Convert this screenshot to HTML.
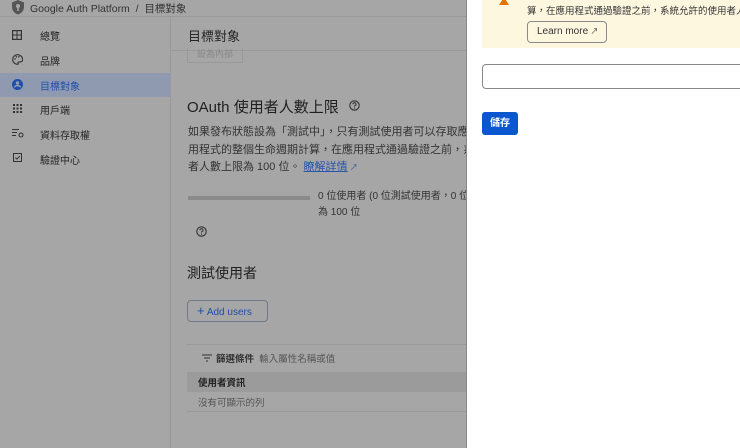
<!DOCTYPE html>
<html><head><meta charset="utf-8"><style>
*{box-sizing:border-box;margin:0;padding:0}
body{width:740px;height:448px;overflow:hidden;position:relative;background:#a6a6a6;font-family:"Liberation Sans","Noto Sans CJK TC",sans-serif;color:#222}
.a{position:absolute;white-space:nowrap}
.side{font-size:10px;color:#262626}
svg.i{position:absolute}
</style></head><body>
<div class="a" style="left:0;top:0;width:466px;height:17px;border-bottom:1px solid #999"></div>
<svg class="a" style="left:11px;top:0" width="14" height="15" viewBox="0 0 14 15"><path d="M7 0L1 2.5V7c0 3.5 2.6 6.5 6 7.5 3.4-1 6-4 6-7.5V2.5z" fill="#555"/><circle cx="7" cy="6" r="2" fill="#a6a6a6"/><rect x="6.2" y="7" width="1.6" height="4" fill="#a6a6a6"/></svg>
<div class="a" style="left:30px;top:1px;font-size:10.5px;color:#333">Google Auth Platform &nbsp;/&nbsp; 目標對象</div>
<div class="a" style="left:170px;top:17px;width:1px;height:431px;background:#999"></div>
<div class="a" style="left:0;top:73px;width:170px;height:24px;background:#8f9ab0"></div>
<svg class="i" style="left:12px;top:30px" width="10" height="10" viewBox="0 0 10 10"><rect x="0.6" y="0.6" width="8.8" height="8.8" fill="none" stroke="#333" stroke-width="1.2"/><path d="M5 1v8M1 5h8" stroke="#333" stroke-width="1"/></svg>
<div class="a side" style="left:40px;top:28px">總覽</div>
<svg class="i" style="left:12px;top:54px" width="11" height="11" viewBox="0 0 11 11"><path d="M5.5 0.7a4.8 4.8 0 1 0 0 9.6c.8 0 1-.6.6-1.1-.4-.6 0-1.3.7-1.3h1.3c1.5 0 2.5-1 2.5-2.5 0-2.6-2.3-4.7-5.1-4.7z" fill="none" stroke="#333" stroke-width="1.1"/><circle cx="3" cy="5" r=".8" fill="#333"/><circle cx="4.3" cy="2.8" r=".8" fill="#333"/><circle cx="6.8" cy="2.8" r=".8" fill="#333"/></svg>
<div class="a side" style="left:40px;top:53px">品牌</div>
<svg class="i" style="left:12px;top:79px" width="11" height="11" viewBox="0 0 11 11"><circle cx="5.5" cy="5.5" r="5.5" fill="#1d4fa8"/><circle cx="5.5" cy="4" r="1.7" fill="#8f9ab0"/><path d="M2.4 8.3c.8-1.3 1.8-1.8 3.1-1.8s2.3.5 3.1 1.8" stroke="#8f9ab0" stroke-width="1.4" fill="none"/></svg>
<div class="a side" style="left:40px;top:78px;color:#1d4fa8">目標對象</div>
<svg class="i" style="left:13px;top:104px" width="9" height="9" viewBox="0 0 9 9" fill="#333"><rect x="0" y="0" width="2" height="2"/><rect x="3.5" y="0" width="2" height="2"/><rect x="7" y="0" width="2" height="2"/><rect x="0" y="3.5" width="2" height="2"/><rect x="3.5" y="3.5" width="2" height="2"/><rect x="7" y="3.5" width="2" height="2"/><rect x="0" y="7" width="2" height="2"/><rect x="3.5" y="7" width="2" height="2"/><rect x="7" y="7" width="2" height="2"/></svg>
<div class="a side" style="left:40px;top:102px">用戶端</div>
<svg class="i" style="left:12px;top:128px" width="12" height="10" viewBox="0 0 12 10"><path d="M0 1.5h7M0 4.5h5M0 7.5h4" stroke="#333" stroke-width="1.1"/><circle cx="9" cy="7" r="2" fill="none" stroke="#333" stroke-width="1.1"/></svg>
<div class="a side" style="left:40px;top:127px">資料存取權</div>
<svg class="i" style="left:13px;top:153px" width="9" height="9" viewBox="0 0 9 9"><rect x=".5" y=".5" width="8" height="8" fill="none" stroke="#333"/><path d="M2.3 4.6l1.6 1.5 2.9-3" stroke="#333" fill="none"/></svg>
<div class="a side" style="left:40px;top:152px">驗證中心</div>
<div class="a" style="left:188px;top:26px;font-size:13px;color:#262626">目標對象</div>
<div class="a" style="left:171px;top:50px;width:295px;height:1px;background:#999"></div>
<div class="a" style="left:187px;top:48px;width:56px;height:15px;border:1px solid #999;border-top:none;font-size:9px;color:#888;text-align:center;line-height:12px">設為內部</div>
<div class="a" style="left:187px;top:96px;font-size:15px;color:#1f1f1f">OAuth 使用者人數上限</div>
<svg class="i" style="left:349px;top:100px" width="11" height="11" viewBox="0 0 11 11"><circle cx="5.5" cy="5.5" r="4.7" fill="none" stroke="#333" stroke-width="1.1"/><path d="M4 4.3a1.5 1.5 0 1 1 2 1.3c-.4.2-.5.5-.5 1" stroke="#333" fill="none"/><circle cx="5.5" cy="8" r=".6" fill="#333"/></svg>
<div class="a" style="left:188px;top:124px;font-size:11px;line-height:17.5px;color:#333">如果發布狀態設為「測試中」，只有測試使用者可以存取應用程式<br>用程式的整個生命週期計算，在應用程式通過驗證之前，系統允許<br>者人數上限為 100 位。 <span style="color:#2856a8;text-decoration:underline">瞭解詳情</span><span style="color:#2856a8;font-size:8px"> ↗</span></div>
<div class="a" style="left:188px;top:196px;width:122px;height:4px;background:#8a8a8a"></div>
<div class="a" style="left:318px;top:189px;font-size:10px;line-height:16px;color:#333">0 位使用者 (0 位測試使用者，0 位其他使用者)<br>為 100 位</div>
<svg class="i" style="left:196px;top:226px" width="11" height="11" viewBox="0 0 11 11"><circle cx="5.5" cy="5.5" r="4.7" fill="none" stroke="#333" stroke-width="1.1"/><path d="M4 4.3a1.5 1.5 0 1 1 2 1.3c-.4.2-.5.5-.5 1" stroke="#333" fill="none"/><circle cx="5.5" cy="8" r=".6" fill="#333"/></svg>
<div class="a" style="left:187px;top:263px;font-size:14px;color:#1f1f1f">測試使用者</div>
<div class="a" style="left:187px;top:300px;width:81px;height:22px;border:1px solid #707a8a;border-radius:4px;font-size:10px;color:#1d4fa8;line-height:20px;padding-left:9px"><b style="font-size:13px;font-weight:normal">+</b> Add users</div>
<div class="a" style="left:187px;top:344px;width:279px;height:1px;background:#999"></div>
<svg class="i" style="left:202px;top:354px" width="10" height="8" viewBox="0 0 10 8"><path d="M0 1h10M2 4h6M4 7h2" stroke="#333" stroke-width="1.1"/></svg>
<div class="a" style="left:216px;top:351px;font-size:9.5px;color:#333"><b>篩選條件</b> &nbsp;<span style="color:#555">輸入屬性名稱或值</span></div>
<div class="a" style="left:187px;top:372px;width:279px;height:20px;background:#9b9b9b"></div>
<div class="a" style="left:198px;top:375px;font-size:9.5px;font-weight:bold;color:#222">使用者資訊</div>
<div class="a" style="left:198px;top:395px;font-size:9.5px;color:#555">沒有可顯示的列</div>
<div class="a" style="left:187px;top:411px;width:279px;height:1px;background:#999"></div>
<div class="a" style="left:466px;top:0;width:274px;height:448px;background:#fff;border-left:1px solid #888"></div>
<div class="a" style="left:482px;top:0;width:258px;height:48px;background:#fef7e0"></div>
<div class="a" style="left:499px;top:-3px;width:0;height:0;border-left:5px solid transparent;border-right:5px solid transparent;border-bottom:8px solid #e37400"></div>
<div class="a" style="left:527px;top:3px;font-size:9.5px;color:#333">算，在應用程式通過驗證之前，系統允許的使用者人</div>
<div class="a" style="left:527px;top:21px;width:80px;height:22px;border:1px solid #8a8a8a;border-radius:4px;font-size:10px;color:#333;line-height:20px;padding-left:9px">Learn more<span style="font-size:8px"> ↗</span></div>
<div class="a" style="left:482px;top:64px;width:270px;height:25px;border:1px solid #888;border-radius:4px"></div>
<div class="a" style="left:482px;top:112px;width:36px;height:23px;background:#0b57d0;border-radius:3px;color:#fff;font-size:10px;font-weight:bold;text-align:center;line-height:23px">儲存</div>
</body></html>
